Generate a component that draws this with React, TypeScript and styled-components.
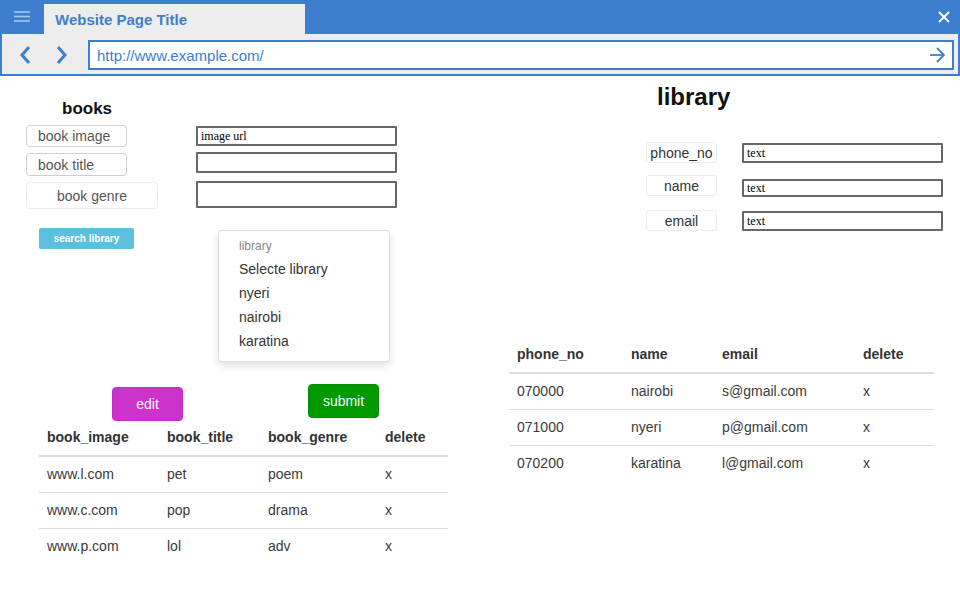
import React from "react";
import styled, { createGlobalStyle } from "styled-components";

const Global = createGlobalStyle`
  html, body { margin: 0; padding: 0; background: #fff; }
  body { font-family: "Liberation Sans", Arial, sans-serif; color: #333; }
  * { box-sizing: border-box; }
`;

const BLUE = "#3d7fce";

const Window = styled.div`
  width: 960px;
  height: 600px;
  overflow: hidden;
  display: flex;
  flex-direction: column;
`;

const TitleBar = styled.div`
  height: 34px;
  background: ${BLUE};
  display: flex;
  align-items: stretch;
`;

const MenuButton = styled.div`
  width: 44px;
  display: flex;
  align-items: center;
  justify-content: center;
`;

const Tab = styled.div`
  margin-top: 4px;
  width: 261px;
  background: #ededed;
  display: flex;
  align-items: center;
  padding-left: 11px;
  font-weight: bold;
  font-size: 15px;
  color: ${BLUE};
`;

const Spacer = styled.div`
  flex: 1;
`;

const CloseButton = styled.div`
  width: 30px;
  display: flex;
  align-items: center;
  justify-content: center;
  padding-right: 2px;
`;

const Toolbar = styled.div`
  height: 42px;
  background: #ededed;
  border: 2px solid ${BLUE};
  border-top: none;
  display: flex;
  align-items: flex-start;
  padding: 6px 4px 0 17px;
`;

const NavButton = styled.div`
  width: 36px;
  height: 30px;
  display: flex;
  align-items: center;
`;

const UrlBox = styled.div`
  margin-left: -3px;
  flex: 1;
  height: 30px;
  background: #fff;
  border: 2px solid ${BLUE};
  display: flex;
  align-items: center;
  padding: 0 7px;
  font-size: 15px;
  color: ${BLUE};
`;

const UrlText = styled.span`
  flex: 1;
`;

const Canvas = styled.div`
  position: relative;
  flex: 1;
`;

const BooksHeading = styled.div`
  position: absolute;
  left: 62px;
  top: 23px;
  font-size: 17px;
  line-height: 20px;
  font-weight: bold;
  color: #111;
`;

const BooksForm = styled.div`
  position: absolute;
  left: 26px;
  top: 49px;
  display: grid;
  grid-template-columns: 132px 201px;
  grid-template-rows: 22px 23px 27px;
  column-gap: 38px;
  row-gap: 6px;
`;

const FieldLabel = styled.div<{ $w?: number; $center?: boolean; $faint?: boolean }>`
  width: ${(p) => (p.$w ? `${p.$w}px` : "100%")};
  height: 100%;
  border: 1px solid ${(p) => (p.$faint ? "#ececec" : "#cfcfcf")};
  border-radius: 4px;
  display: flex;
  align-items: center;
  justify-content: ${(p) => (p.$center ? "center" : "flex-start")};
  padding-left: ${(p) => (p.$center ? "0" : "11px")};
  font-size: 14px;
  color: #555;
  background: #fff;
`;

const SketchInput = styled.div<{ $h: number; $dy?: number }>`
  height: ${(p) => p.$h}px;
  margin-top: ${(p) => p.$dy ?? 0}px;
  border: 2px solid #676767;
  border-radius: 1px;
  font-family: "Liberation Serif", "Times New Roman", serif;
  font-size: 12px;
  color: #000;
  display: flex;
  align-items: center;
  padding-left: 3px;
  background: #fff;
`;

const SearchButton = styled.div`
  position: absolute;
  left: 39px;
  top: 152px;
  width: 95px;
  height: 21px;
  background: #5bc0de;
  border-radius: 2px;
  color: #fff;
  font-size: 10px;
  font-weight: bold;
  display: flex;
  align-items: center;
  justify-content: center;
`;

const Dropdown = styled.div`
  position: absolute;
  left: 218px;
  top: 154px;
  width: 172px;
  height: 132px;
  background: #fff;
  border: 1px solid rgba(0, 0, 0, 0.13);
  border-radius: 4px;
  box-shadow: 0 4px 10px rgba(0, 0, 0, 0.12);
  padding: 6px 0 8px;
  display: flex;
  flex-direction: column;
`;

const DropdownHeader = styled.div`
  padding: 0 20px;
  line-height: 18px;
  font-size: 12px;
  color: #888;
  margin-bottom: 2px;
`;

const DropdownItem = styled.div`
  padding: 0 20px;
  line-height: 24px;
  font-size: 14px;
  color: #333;
`;

const LibraryHeading = styled.div`
  position: absolute;
  left: 657px;
  top: 7px;
  font-size: 24px;
  line-height: 28px;
  font-weight: bold;
  color: #111;
`;

const LibraryForm = styled.div`
  position: absolute;
  left: 646px;
  top: 66px;
  display: grid;
  grid-template-columns: 71px 201px;
  grid-template-rows: 21px 21px 21px;
  column-gap: 25px;
  row-gap: 12px;
`;

const SmallLabel = styled.div<{ $dy?: number }>`
  margin-top: ${(p) => p.$dy ?? 0}px;
  height: 21px;
  border: 1px solid #ececec;
  border-radius: 3px;
  display: flex;
  align-items: center;
  justify-content: center;
  font-size: 14px;
  color: #333;
`;

const ColorButton = styled.div<{ $bg: string; $border: string; $x: number; $y: number }>`
  position: absolute;
  left: ${(p) => p.$x}px;
  top: ${(p) => p.$y}px;
  width: 71px;
  height: 34px;
  background: ${(p) => p.$bg};
  border: 1px solid ${(p) => p.$border};
  border-radius: 4px;
  color: #fff;
  font-size: 14px;
  display: flex;
  align-items: center;
  justify-content: center;
`;

const Table = styled.table<{ $x: number; $y: number; $w: number }>`
  position: absolute;
  left: ${(p) => p.$x}px;
  top: ${(p) => p.$y}px;
  width: ${(p) => p.$w}px;
  border-collapse: collapse;
  font-size: 14px;
  color: #333;
  table-layout: fixed;
`;

const Th = styled.th`
  text-align: left;
  font-weight: bold;
  padding: 8px 8px 8px;
  line-height: 20px;
  border-bottom: 2px solid #ddd;
`;

const Td = styled.td`
  padding: 8px;
  line-height: 19px;
  border-top: 1px solid #ddd;
  color: #3a3a3a;
`;

const FirstRow = styled.tr`
  td { border-top: none; }
`;

const Hamburger = () => (
  <svg width="18" height="14" viewBox="0 0 18 14">
    <g stroke="#a9c6ec" strokeWidth="1.6">
      <line x1="1" y1="2" x2="17" y2="2" />
      <line x1="1" y1="6.5" x2="17" y2="6.5" />
      <line x1="1" y1="11" x2="17" y2="11" />
    </g>
  </svg>
);

const CloseIcon = () => (
  <svg width="12" height="12" viewBox="0 0 12 12">
    <g stroke="#fff" strokeWidth="1.8">
      <line x1="1" y1="1" x2="11" y2="11" />
      <line x1="11" y1="1" x2="1" y2="11" />
    </g>
  </svg>
);

const Chevron = ({ dir }: { dir: "left" | "right" }) => (
  <svg width="14" height="20" viewBox="0 0 14 20">
    <polyline
      points={dir === "left" ? "10,2 3,10 10,18" : "3,2 10,10 3,18"}
      fill="none"
      stroke={BLUE}
      strokeWidth="3"
    />
  </svg>
);

const GoArrow = () => (
  <svg width="16" height="16" viewBox="0 0 16 16">
    <g fill="none" stroke={BLUE} strokeWidth="1.8">
      <line x1="1" y1="8" x2="15" y2="8" />
      <polyline points="8,1 15,8 8,15" />
    </g>
  </svg>
);

const books = [
  ["www.l.com", "pet", "poem", "x"],
  ["www.c.com", "pop", "drama", "x"],
  ["www.p.com", "lol", "adv", "x"],
];

const libraries = [
  ["070000", "nairobi", "s@gmail.com", "x"],
  ["071000", "nyeri", "p@gmail.com", "x"],
  ["070200", "karatina", "l@gmail.com", "x"],
];

function DataTable({
  x, y, w, cols, head, rows,
}: { x: number; y: number; w: number; cols: number[]; head: string[]; rows: string[][] }) {
  return (
    <Table $x={x} $y={y} $w={w}>
      <colgroup>
        {cols.map((c, i) => (
          <col key={i} style={{ width: c }} />
        ))}
      </colgroup>
      <thead>
        <tr>
          {head.map((h) => (
            <Th key={h}>{h}</Th>
          ))}
        </tr>
      </thead>
      <tbody>
        {rows.map((r, i) => {
          const cells = r.map((c, j) => <Td key={j}>{c}</Td>);
          return i === 0 ? <FirstRow key={i}>{cells}</FirstRow> : <tr key={i}>{cells}</tr>;
        })}
      </tbody>
    </Table>
  );
}

export default function App() {
  return (
    <>
      <Global />
      <Window>
        <TitleBar>
          <MenuButton>
            <Hamburger />
          </MenuButton>
          <Tab>Website Page Title</Tab>
          <Spacer />
          <CloseButton>
            <CloseIcon />
          </CloseButton>
        </TitleBar>
        <Toolbar>
          <NavButton>
            <Chevron dir="left" />
          </NavButton>
          <NavButton>
            <Chevron dir="right" />
          </NavButton>
          <UrlBox>
            <UrlText>http://www.example.com/</UrlText>
            <GoArrow />
          </UrlBox>
        </Toolbar>
        <Canvas>
          <BooksHeading>books</BooksHeading>
          <BooksForm>
            <FieldLabel $w={101}>book image</FieldLabel>
            <SketchInput $h={20} $dy={1}>image url</SketchInput>
            <FieldLabel $w={101}>book title</FieldLabel>
            <SketchInput $h={21} $dy={-1} />
            <FieldLabel $center $faint>book genre</FieldLabel>
            <SketchInput $h={27} $dy={-1} />
          </BooksForm>
          <SearchButton>search library</SearchButton>
          <Dropdown>
            <DropdownHeader>library</DropdownHeader>
            <DropdownItem>Selecte library</DropdownItem>
            <DropdownItem>nyeri</DropdownItem>
            <DropdownItem>nairobi</DropdownItem>
            <DropdownItem>karatina</DropdownItem>
          </Dropdown>

          <LibraryHeading>library</LibraryHeading>
          <LibraryForm>
            <SmallLabel>phone_no</SmallLabel>
            <SketchInput $h={20} $dy={1}>text</SketchInput>
            <SmallLabel>name</SmallLabel>
            <SketchInput $h={18} $dy={4}>text</SketchInput>
            <SmallLabel $dy={2}>email</SmallLabel>
            <SketchInput $h={20} $dy={3}>text</SketchInput>
          </LibraryForm>

          <ColorButton $bg="#cc33cc" $border="#c42fc4" $x={112} $y={311}>edit</ColorButton>
          <ColorButton $bg="#009900" $border="#0a8a0a" $x={308} $y={308}>submit</ColorButton>

          <DataTable
            x={39}
            y={343}
            w={409}
            cols={[120, 101, 117, 71]}
            head={["book_image", "book_title", "book_genre", "delete"]}
            rows={books}
          />
          <DataTable
            x={509}
            y={260}
            w={425}
            cols={[114, 91, 141, 79]}
            head={["phone_no", "name", "email", "delete"]}
            rows={libraries}
          />
        </Canvas>
      </Window>
    </>
  );
}
